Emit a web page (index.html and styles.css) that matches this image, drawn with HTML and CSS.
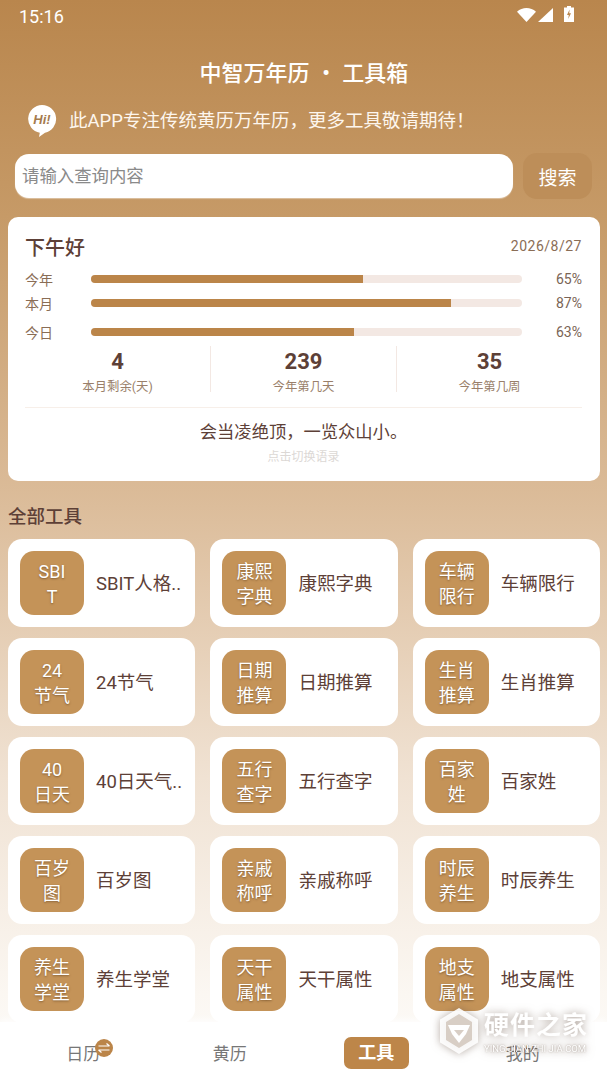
FILE: index.html
```html
<!DOCTYPE html>
<html lang="zh-CN">
<head>
    <meta charset="UTF-8">
    <meta name="viewport" content="width=device-width, initial-scale=1.0">
    <title>中智万年历 工具箱</title>
    <link rel="stylesheet" href="styles.css">
</head>
<body>
    <div class="app">
        <main class="content">
            <div class="status-bar">
                <span class="status-time">15:16</span>
                <div class="status-icons">
                    <svg width="19" height="14" viewBox="0 0 19 14"><path d="M0 3.800C5.300-1.200 13.700-1.200 19 3.800L9.500 14z" fill="#fff"/></svg>
                    <svg width="15" height="14" viewBox="0 0 15 14"><path d="M15 0v14H0z" fill="#fff"/></svg>
                    <svg class="battery" width="10" height="16" viewBox="0 0 10 16"><path d="M3 0h4v1.500h3V16H0V1.500h3z" fill="#fff"/><path d="M5.600 3.500 3 9h1.800L4.200 13 7 7.300H5.200z" fill="#b9864d"/></svg>
                </div>
            </div>

            <h1 class="app-title">中智万年历 &nbsp;•&nbsp; 工具箱</h1>

            <div class="notice">
                <svg class="hi-icon" width="30" height="33" viewBox="0 0 30 33">
                    <path d="M15 1a14 14 0 0 1 3 27.700L12 33l.8-4.200A14 14 0 0 1 15 1z" fill="#fff"/>
                    <text x="15" y="20" text-anchor="middle" class="hi-text">Hi!</text>
                </svg>
                <span class="notice-text">此APP专注传统黄历万年历，更多工具敬请期待！</span>
            </div>

            <div class="search-row">
                <div class="search-input">请输入查询内容</div>
                <button class="search-button">搜索</button>
            </div>

            <section class="summary">
                <div class="summary-head">
                    <span class="greeting">下午好</span>
                    <span class="date">2026/8/27</span>
                </div>
                <div class="progress-row">
                    <span class="progress-label">今年</span>
                    <div class="progress-track"><div class="progress-fill" style="width: 63%"></div></div>
                    <span class="progress-value">65%</span>
                </div>
                <div class="progress-row">
                    <span class="progress-label">本月</span>
                    <div class="progress-track"><div class="progress-fill" style="width: 83.500%"></div></div>
                    <span class="progress-value">87%</span>
                </div>
                <div class="progress-row progress-row-last">
                    <span class="progress-label">今日</span>
                    <div class="progress-track"><div class="progress-fill" style="width: 61%"></div></div>
                    <span class="progress-value">63%</span>
                </div>
                <div class="stats">
                    <div class="stat"><b>4</b><span>本月剩余(天)</span></div>
                    <div class="stat"><b>239</b><span>今年第几天</span></div>
                    <div class="stat"><b>35</b><span>今年第几周</span></div>
                </div>
                <div class="quote">会当凌绝顶，一览众山小。</div>
                <div class="quote-hint">点击切换语录</div>
            </section>

            <h2 class="section-title">全部工具</h2>

            <div class="tool-grid">
                <div class="tool"><div class="tool-icon">SBI<br>T</div><span class="tool-name">SBIT人格..</span></div>
                <div class="tool"><div class="tool-icon">康熙<br>字典</div><span class="tool-name">康熙字典</span></div>
                <div class="tool"><div class="tool-icon">车辆<br>限行</div><span class="tool-name">车辆限行</span></div>
                <div class="tool"><div class="tool-icon">24<br>节气</div><span class="tool-name">24节气</span></div>
                <div class="tool"><div class="tool-icon">日期<br>推算</div><span class="tool-name">日期推算</span></div>
                <div class="tool"><div class="tool-icon">生肖<br>推算</div><span class="tool-name">生肖推算</span></div>
                <div class="tool"><div class="tool-icon">40<br>日天</div><span class="tool-name">40日天气..</span></div>
                <div class="tool"><div class="tool-icon">五行<br>查字</div><span class="tool-name">五行查字</span></div>
                <div class="tool"><div class="tool-icon">百家<br>姓</div><span class="tool-name">百家姓</span></div>
                <div class="tool"><div class="tool-icon">百岁<br>图</div><span class="tool-name">百岁图</span></div>
                <div class="tool"><div class="tool-icon">亲戚<br>称呼</div><span class="tool-name">亲戚称呼</span></div>
                <div class="tool"><div class="tool-icon">时辰<br>养生</div><span class="tool-name">时辰养生</span></div>
                <div class="tool"><div class="tool-icon">养生<br>学堂</div><span class="tool-name">养生学堂</span></div>
                <div class="tool"><div class="tool-icon">天干<br>属性</div><span class="tool-name">天干属性</span></div>
                <div class="tool"><div class="tool-icon">地支<br>属性</div><span class="tool-name">地支属性</span></div>
            </div>
        </main>

        <nav class="tabbar">
            <div class="tab">
                <span class="tab-label">日历
                    <span class="swap-badge">
                        <svg width="16" height="16" viewBox="0 0 16 16" fill="none" stroke="#fff" stroke-width="1.200"><path d="M2.500 6h11M10.500 3.500 13.500 6M13.500 10h-11M5.500 12.500 2.500 10"/></svg>
                    </span>
                </span>
            </div>
            <div class="tab"><span class="tab-label">黄历</span></div>
            <div class="tab"><span class="tab-active">工具</span></div>
            <div class="tab"><span class="tab-label">我的</span></div>
        </nav>

        <div class="watermark">
            <svg width="40" height="48" viewBox="0 0 40 48">
                <path d="M20 1 39 12.500v23L20 47 1 35.500v-23z" fill="#fff" fill-opacity=".9"/>
                <path d="M20 7 33 15v18L20 41 7 33V15z" fill="#d8cec5"/>
                <path d="M9 18h22l-4 9-7 9-7-9z" fill="#fff"/>
                <path d="M15 23h10l-5 6z" fill="#d8cec5"/>
            </svg>
            <div class="watermark-text">
                <div class="watermark-cn">硬件之家</div>
                <div class="watermark-en">YING JIAN ZHI JIA.COM</div>
            </div>
        </div>
    </div>
</body>
</html>
```

FILE: styles.css
```css
* {
    box-sizing: border-box;
}

html, body {
    margin: 0;
    padding: 0;
}

body {
    font-family: Roboto, 'Noto Sans CJK SC', sans-serif;
    color: #5d4037;
}

.app {
    position: relative;
    display: flex;
    flex-direction: column;
    width: 607px;
    height: 1080px;
    overflow: hidden;
    background: linear-gradient(180deg, #b9864d 0%, #c69a67 20%, #dcbd9b 47%, #f0e2d3 72%, #fbf7f2 92%, #fdfdfb 100%);
}

.content {
    flex: 1;
    min-height: 0;
    overflow: hidden;
    padding: 0 7px 0 8px;
}

.status-bar {
    display: flex;
    justify-content: space-between;
    align-items: center;
    height: 30px;
    padding: 0 26px 0 11px;
    color: #fff;
}

.status-time {
    margin-top: 2px;
    font-size: 18px;
}

.status-icons {
    display: flex;
    align-items: flex-start;
    gap: 2px;
    height: 16px;
    margin-bottom: 2px;
}

.status-icons svg {
    margin-top: 2px;
}

.status-icons .battery {
    margin-top: 0;
    margin-left: 9px;
}

.app-title {
    margin: 28px 0 0;
    height: 32px;
    line-height: 32px;
    font-size: 22px;
    font-weight: 500;
    word-spacing: 0.8px;
    text-align: center;
    color: #fff;
}

.notice {
    display: flex;
    align-items: center;
    gap: 12px;
    height: 34px;
    margin-top: 13px;
    padding-left: 19px;
    font-size: 18.500px;
    color: #fdf6ee;
}

.notice-text {
    padding-bottom: 3px;
}

.hi-icon {
    flex: none;
    margin-top: 1px;
}

.hi-text {
    font-family: 'Liberation Sans', sans-serif;
    font-size: 13px;
    font-weight: bold;
    font-style: italic;
    fill: #a57a4d;
}

.search-row {
    display: flex;
    align-items: center;
    gap: 10px;
    margin-top: 16px;
    padding-left: 7px;
}

.search-input {
    flex: none;
    width: 498px;
    height: 44px;
    line-height: 44px;
    padding-left: 7px;
    background-color: #fff;
    border-radius: 14px;
    box-shadow: 0 1px 1px rgba(255, 255, 255, 0.4);
    font-size: 17.400px;
    color: #8a8a8a;
}

.search-button {
    width: 69px;
    height: 46px;
    border: none;
    border-radius: 14px;
    background-color: #bd8e59;
    color: #fff;
    font-family: inherit;
    font-size: 19px;
    padding: 0;
}

.summary {
    height: 264px;
    margin-top: 18px;
    padding: 14px 18px 0 17px;
    background-color: #fff;
    border-radius: 10px;
}

.summary-head {
    display: flex;
    justify-content: space-between;
    align-items: center;
    height: 30px;
}

.greeting {
    font-size: 20px;
    font-weight: 500;
}

.date {
    font-size: 14px;
    letter-spacing: 0.5px;
    color: #8a6d55;
}

.progress-row {
    display: flex;
    align-items: center;
    height: 24px;
    font-size: 14px;
    color: #8a6d55;
}

.progress-row:nth-child(2) {
    margin-top: 6px;
}

.progress-row-last {
    margin-top: 5px;
}

.progress-label {
    flex: none;
    width: 66px;
}

.progress-track {
    flex: none;
    width: 431px;
    height: 8px;
    background-color: #f3e8e3;
    border-radius: 4px;
    overflow: hidden;
}

.progress-fill {
    height: 100%;
    background-color: #bb8549;
}

.progress-value {
    flex: 1;
    text-align: right;
    color: #7a6455;
}

.stats {
    display: flex;
    height: 62px;
    margin-top: 2px;
    border-bottom: 1px solid #f7efe9;
}

.stat {
    flex: 1;
    display: flex;
    flex-direction: column;
    align-items: center;
    height: 46px;
    margin-bottom: 0;
    border-left: 1px solid #f3e8e3;
}

.stat:first-child {
    border-left: none;
}

.stat b {
    height: 30px;
    line-height: 32px;
    font-size: 22px;
    font-weight: 700;
}

.stat span {
    margin-top: 1px;
    white-space: nowrap;
    font-size: 12.400px;
    line-height: 20px;
    color: #9a7f6a;
}

.quote {
    margin-top: 12px;
    height: 24px;
    line-height: 24px;
    font-size: 17.300px;
    text-align: center;
}

.quote-hint {
    margin-top: 4px;
    font-size: 12px;
    line-height: 18px;
    text-align: center;
    color: #dcd8d5;
}

.section-title {
    margin: 23px 0 0;
    height: 26px;
    line-height: 26px;
    font-size: 18.500px;
    font-weight: 500;
}

.tool-grid {
    display: grid;
    grid-template-columns: repeat(3, 187.300px);
    column-gap: 15.100px;
    row-gap: 11px;
    margin-top: 9px;
}

.tool {
    display: flex;
    align-items: center;
    gap: 12px;
    height: 88px;
    padding-left: 12px;
    background-color: #fff;
    border-radius: 14px;
}

.tool-icon {
    flex: none;
    width: 64px;
    height: 64px;
    padding-top: 8px;
    border-radius: 14px;
    background-color: #c49358;
    color: #fff;
    font-size: 18px;
    line-height: 25px;
    text-align: center;
    text-shadow: 0 1px 2px rgba(90, 60, 30, 0.6);
}

.tool-name {
    padding-bottom: 3px;
    white-space: nowrap;
    font-size: 18.500px;
}

.tabbar {
    flex: none;
    display: flex;
    align-items: center;
    height: 58px;
    padding: 3px 11px 0 10px;
    background-color: rgba(255, 255, 255, 0.96);
    box-shadow: 0 -3px 6px rgba(255, 255, 255, 0.7);
}

.tab {
    flex: 1;
    display: flex;
    justify-content: center;
}

.tab-label {
    position: relative;
    font-size: 17px;
    color: #777;
    white-space: nowrap;
}

.swap-badge {
    position: absolute;
    top: -1px;
    right: -13px;
    display: flex;
    align-items: center;
    justify-content: center;
    width: 18px;
    height: 18px;
    border-radius: 50%;
    background-color: #bb8549;
}

.tab-active {
    display: block;
    width: 65px;
    height: 32px;
    line-height: 32px;
    border-radius: 7px;
    background-color: #bd8649;
    color: #fff;
    font-size: 18px;
    font-weight: 700;
    text-align: center;
}

.watermark {
    position: absolute;
    left: 439px;
    top: 1007px;
    display: flex;
    gap: 5px;
    filter: drop-shadow(0 0 4px rgba(110, 90, 75, 0.55));
}

.watermark-cn {
    margin-top: 3px;
    font-size: 25px;
    line-height: 32px;
    font-weight: 700;
    letter-spacing: 1px;
    color: #fff;
    white-space: nowrap;
}

.watermark-en {
    margin-top: 1px;
    font-size: 9.500px;
    line-height: 12px;
    color: #fff;
    white-space: nowrap;
    text-shadow: 0 0 2px rgba(110, 90, 75, 0.6);
}
```
